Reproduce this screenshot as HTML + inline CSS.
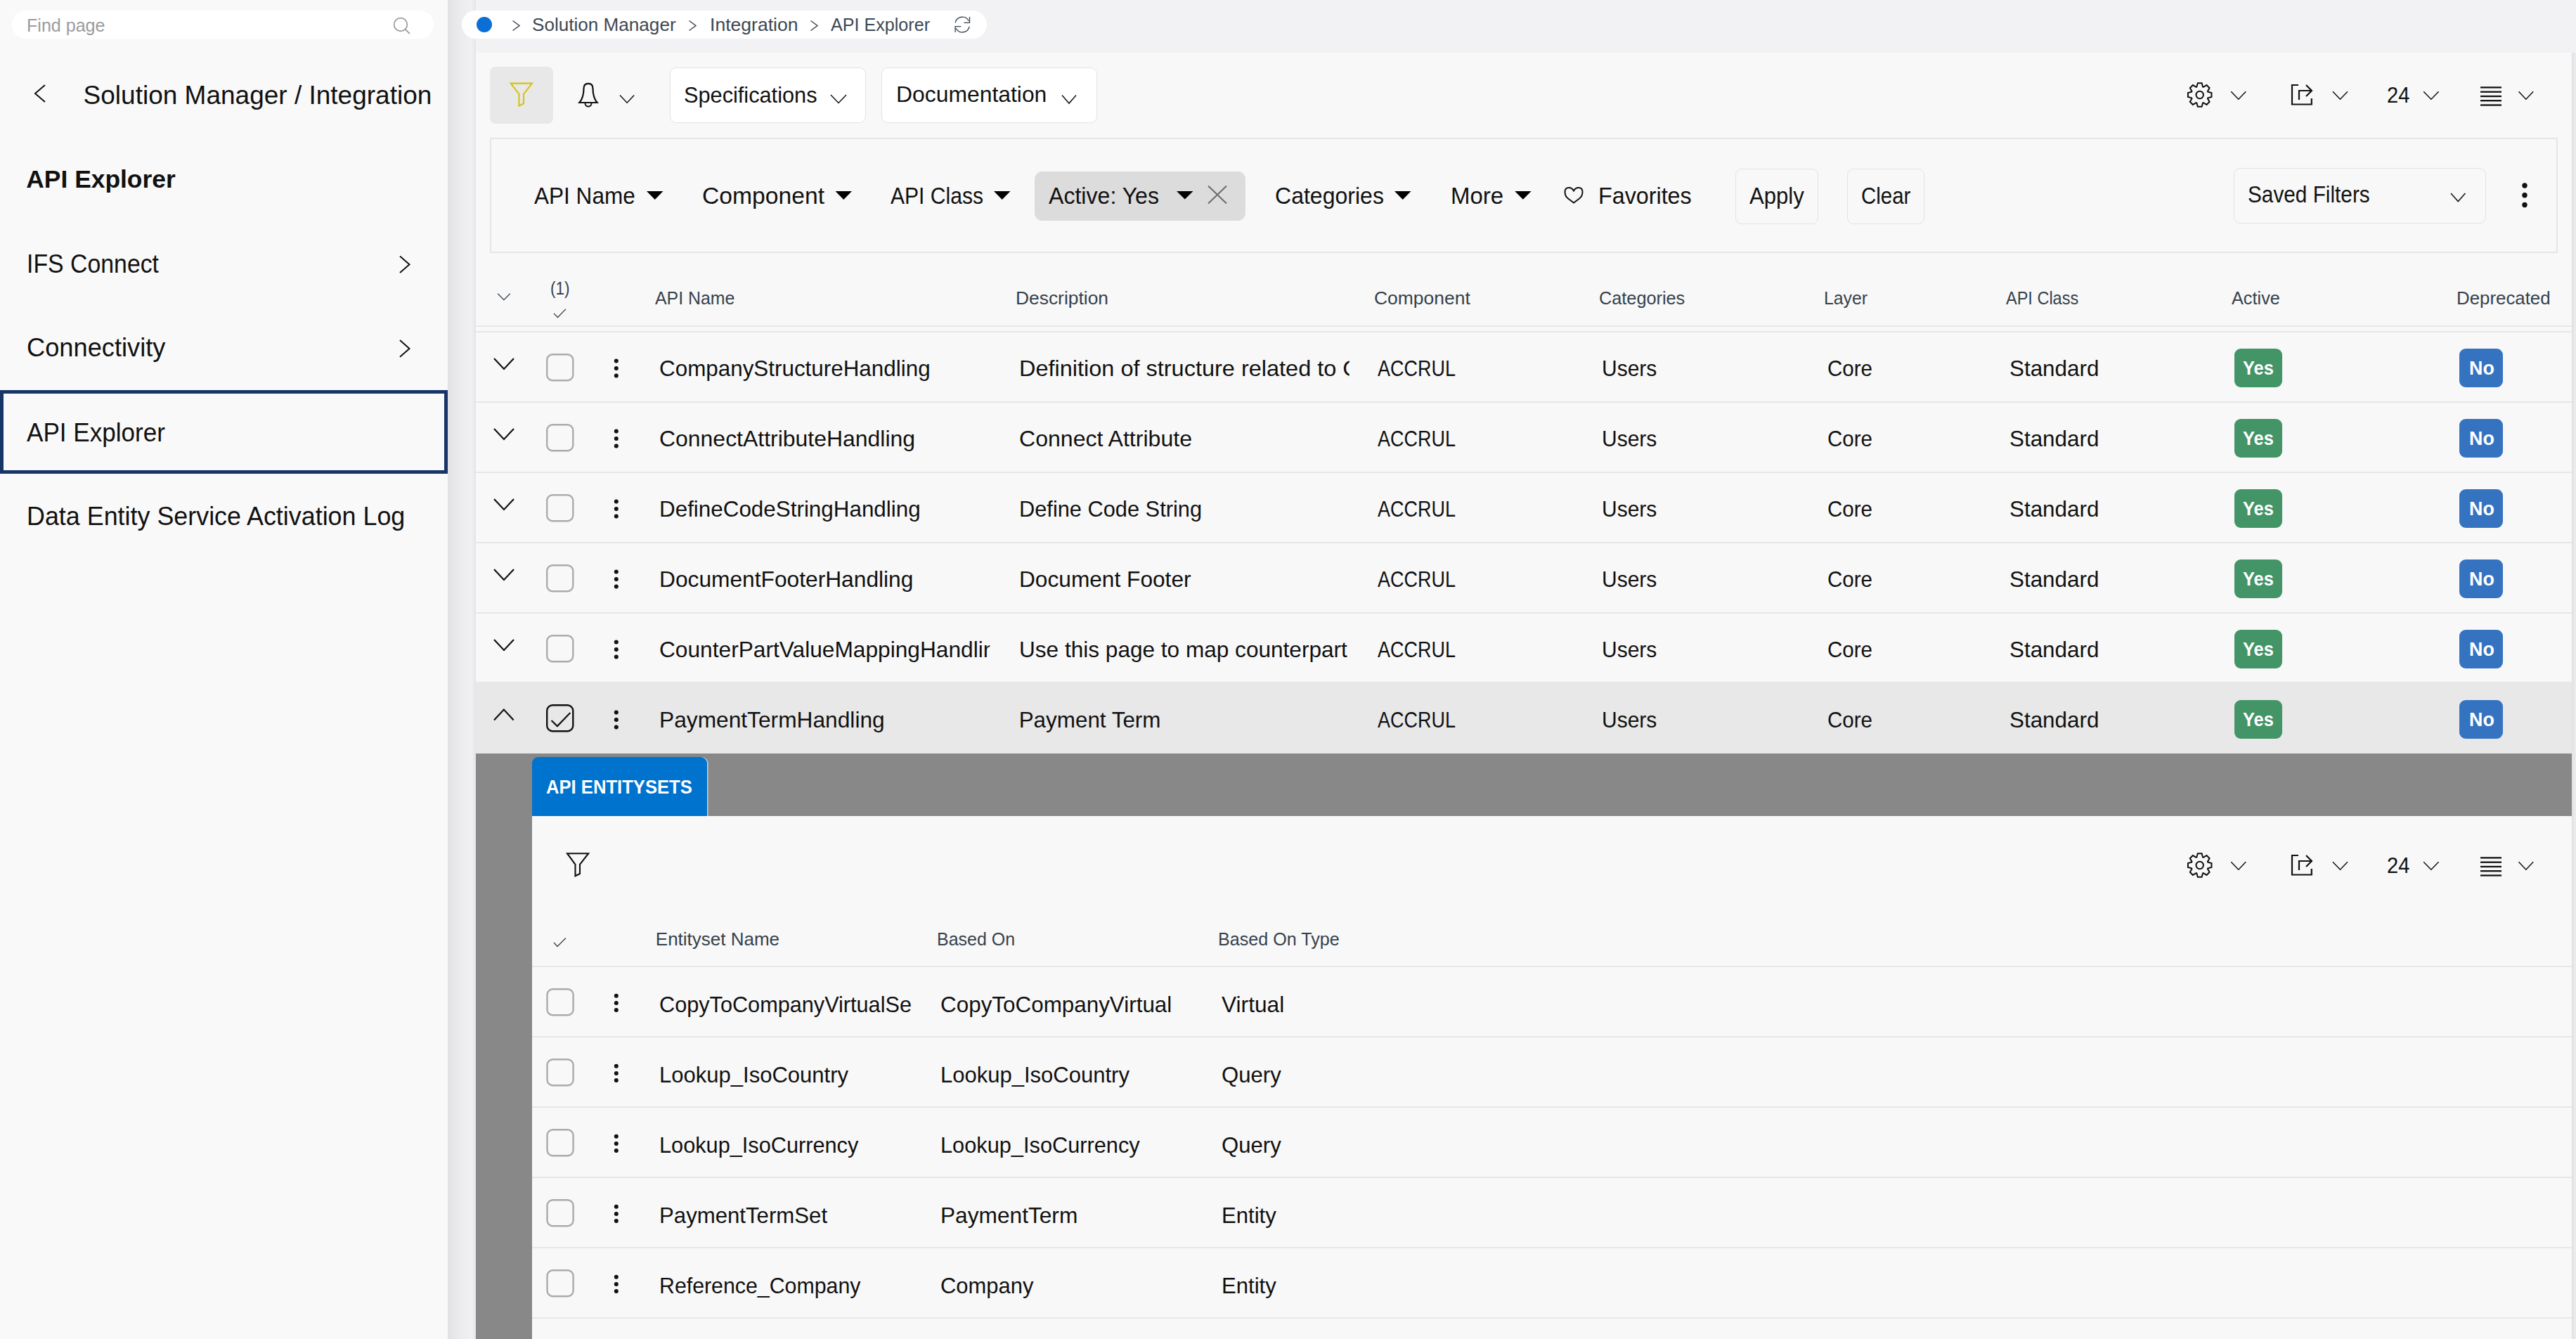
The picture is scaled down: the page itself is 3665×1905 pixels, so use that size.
<!DOCTYPE html>
<html><head><meta charset="utf-8"><style>
html,body{margin:0;padding:0;width:3665px;height:1905px;overflow:hidden;background:#f2f1f4}
body{position:relative;font-family:"Liberation Sans",sans-serif}
div{position:absolute}
.t{line-height:1;white-space:nowrap}
svg{position:absolute;left:0;top:0}
</style></head><body>

<div style="left:0px;top:0px;width:3665px;height:1905px;background:#f2f1f4"></div>
<div style="left:0px;top:0px;width:637px;height:1905px;background:#f9f9f9"></div>
<div style="left:637px;top:0px;width:40px;height:1905px;background:linear-gradient(90deg,#e2e0e4 0px,#e9e8ea 12px,#efeef1 28px,#f1f0f3 34px,#e4e3e6 40px)"></div>
<div style="left:17px;top:15px;width:600px;height:40px;background:#fff;border-radius:20px"></div>
<div style="left:0px;top:555px;width:637px;height:119px;box-sizing:border-box;border:5px solid #173569"></div>
<div style="left:657px;top:15px;width:747px;height:40px;background:#fff;border-radius:20px"></div>
<div style="left:678px;top:24px;width:22px;height:22px;background:#0b6fd6;border-radius:50%"></div>
<div style="left:677px;top:75px;width:2982px;height:1830px;background:#f8f8f8"></div>
<div style="left:3659px;top:75px;width:6px;height:1830px;background:linear-gradient(90deg,#e0dfe2,#eeedf0)"></div>
<div style="left:697px;top:95px;width:90px;height:81px;background:#e8e8e8;border-radius:8px"></div>
<div style="left:953px;top:95.5px;width:279px;height:79px;background:#fff;border:1.5px solid #e3e3e3;border-radius:9px;box-sizing:border-box"></div>
<div style="left:1253.5px;top:95.5px;width:307px;height:79px;background:#fff;border:1.5px solid #e3e3e3;border-radius:9px;box-sizing:border-box"></div>
<div style="left:697px;top:196px;width:2942px;height:164px;border:2px solid #e6e6e6;box-sizing:border-box"></div>
<div style="left:1472px;top:244px;width:300px;height:70px;background:#dcdcdc;border-radius:11px"></div>
<div style="left:2469px;top:239.5px;width:118px;height:79px;border:1.5px solid #e3e3e3;border-radius:9px;box-sizing:border-box"></div>
<div style="left:2628px;top:239.5px;width:110px;height:79px;border:1.5px solid #e3e3e3;border-radius:9px;box-sizing:border-box"></div>
<div style="left:3177.5px;top:238.5px;width:359px;height:79px;border:1.5px solid #e3e3e3;border-radius:9px;box-sizing:border-box"></div>
<div style="left:677px;top:463px;width:2982px;height:2px;background:#e7e7e7"></div>
<div style="left:677px;top:571px;width:2982px;height:2px;background:#e7e7e7"></div>
<div style="left:677px;top:671px;width:2982px;height:2px;background:#e7e7e7"></div>
<div style="left:677px;top:771px;width:2982px;height:2px;background:#e7e7e7"></div>
<div style="left:677px;top:871px;width:2982px;height:2px;background:#e7e7e7"></div>
<div style="left:677px;top:971px;width:2982px;height:2px;background:#e7e7e7"></div>
<div style="left:677px;top:1071px;width:2982px;height:2px;background:#e7e7e7"></div>
<div style="left:677px;top:471px;width:2982px;height:2px;background:#e7e7e7"></div>
<div style="left:677px;top:970px;width:2982px;height:102px;background:#e8e8e8"></div>
<div style="left:677px;top:1072px;width:2982px;height:833px;background:#888888"></div>
<div style="left:757px;top:1161px;width:2902px;height:744px;background:#f8f8f8"></div>
<div style="left:757px;top:1077px;width:249px;height:84px;background:#0073cf;border-radius:9px 9px 0 0;box-shadow:1.5px 0 0 #d0d0d0"></div>
<div style="left:677px;top:1374px;width:2982px;height:0px;"></div>
<div style="left:757px;top:1374px;width:2902px;height:2px;background:#e7e7e7"></div>
<div style="left:757px;top:1474px;width:2902px;height:2px;background:#e7e7e7"></div>
<div style="left:757px;top:1574px;width:2902px;height:2px;background:#e7e7e7"></div>
<div style="left:757px;top:1674px;width:2902px;height:2px;background:#e7e7e7"></div>
<div style="left:757px;top:1774px;width:2902px;height:2px;background:#e7e7e7"></div>
<div style="left:757px;top:1874px;width:2902px;height:2px;background:#e7e7e7"></div>
<div style="left:3179px;top:496px;width:68px;height:54.5px;background:#439467;border-radius:9px"></div>
<div style="left:3499px;top:496px;width:62px;height:54.5px;background:#3573c1;border-radius:9px"></div>
<div style="left:3179px;top:596px;width:68px;height:54.5px;background:#439467;border-radius:9px"></div>
<div style="left:3499px;top:596px;width:62px;height:54.5px;background:#3573c1;border-radius:9px"></div>
<div style="left:3179px;top:696px;width:68px;height:54.5px;background:#439467;border-radius:9px"></div>
<div style="left:3499px;top:696px;width:62px;height:54.5px;background:#3573c1;border-radius:9px"></div>
<div style="left:3179px;top:796px;width:68px;height:54.5px;background:#439467;border-radius:9px"></div>
<div style="left:3499px;top:796px;width:62px;height:54.5px;background:#3573c1;border-radius:9px"></div>
<div style="left:3179px;top:896px;width:68px;height:54.5px;background:#439467;border-radius:9px"></div>
<div style="left:3499px;top:896px;width:62px;height:54.5px;background:#3573c1;border-radius:9px"></div>
<div style="left:3179px;top:996px;width:68px;height:54.5px;background:#439467;border-radius:9px"></div>
<div style="left:3499px;top:996px;width:62px;height:54.5px;background:#3573c1;border-radius:9px"></div>
<svg width="3665" height="1905" viewBox="0 0 3665 1905"><circle cx="570" cy="35" r="9.3" fill="none" stroke="#9a9a9e" stroke-width="1.7"/>
<path d="M576.8 41.8 L582.8 47.8" fill="none" stroke="#9a9a9e" stroke-width="1.9" />
<path d="M64 121 L50 133 L64 145" fill="none" stroke="#111111" stroke-width="2" />
<path d="M569 364.5 L582.5 376.3 L569 388" fill="none" stroke="#111111" stroke-width="2" />
<path d="M569 484 L582.5 496 L569 507.8" fill="none" stroke="#111111" stroke-width="2" />
<path d="M729.5 29.5 L739.0 36.5 L729.5 43.5" fill="none" stroke="#3d4852" stroke-width="1.5" />
<path d="M980.5 29.5 L990.0 36.5 L980.5 43.5" fill="none" stroke="#3d4852" stroke-width="1.5" />
<path d="M1153.5 29.5 L1163.0 36.5 L1153.5 43.5" fill="none" stroke="#3d4852" stroke-width="1.5" />
<path d="M1359.2 32.3 A10.2 10.2 0 0 1 1378.3 29.8" fill="none" stroke="#37434d" stroke-width="1.3" />
<path d="M1379.5 24 L1379.5 32.3 L1371.4 32.3" fill="none" stroke="#37434d" stroke-width="1.3" />
<path d="M1379.2 37.7 A10.2 10.2 0 0 1 1360.1 40.2" fill="none" stroke="#37434d" stroke-width="1.3" />
<path d="M1359.1 46 L1359.1 37.7 L1367.2 37.7" fill="none" stroke="#37434d" stroke-width="1.3" />
<path d="M726.6 118.6 L757 118.6 L745 133.8 L745 147.3 L738.5 150.6 L738.5 133.8 Z" fill="none" stroke="#d6c411" stroke-width="2.1" stroke-linejoin="miter"/>
<path d="M824.3 146 C829.5 140 830.5 132 830.5 126 C830.5 121 833 118.8 837 118.8 C841 118.8 843.5 121 843.5 126 C843.5 132 844.5 140 849.7 146 Z" fill="none" stroke="#111111" stroke-width="2.2" />
<path d="M832.5 147 A4.5 4.5 0 0 0 841.5 147" fill="none" stroke="#111111" stroke-width="2" />
<path d="M882 135.5 L892.1 146.2 L902.2 135.5" fill="none" stroke="#111111" stroke-width="1.5" />
<path d="M1182 135 L1193.0 146.5 L1204 135" fill="none" stroke="#111111" stroke-width="1.5" />
<path d="M1511 135.5 L1521.0 147 L1531 135.5" fill="none" stroke="#111111" stroke-width="1.5" />
<path d="M3125.37 123.49 L3126.82 118.25 L3132.58 118.25 L3134.03 123.49 L3134.78 123.80 L3139.51 121.12 L3143.58 125.19 L3140.90 129.92 L3141.21 130.67 L3146.45 132.12 L3146.45 137.88 L3141.21 139.33 L3140.90 140.08 L3143.58 144.81 L3139.51 148.88 L3134.78 146.20 L3134.03 146.51 L3132.58 151.75 L3126.82 151.75 L3125.37 146.51 L3124.62 146.20 L3119.89 148.88 L3115.82 144.81 L3118.50 140.08 L3118.19 139.33 L3112.95 137.88 L3112.95 132.12 L3118.19 130.67 L3118.50 129.92 L3115.82 125.19 L3119.89 121.12 L3124.62 123.80 Z" fill="none" stroke="#111111" stroke-width="2" />
<circle cx="3129.7" cy="135" r="5.2" fill="none" stroke="#111111" stroke-width="2"/>
<path d="M3174.3 130.2 L3184.8 141.2 L3195.3 130.2" fill="none" stroke="#111111" stroke-width="1.5" />
<path d="M3270 121 L3261 121 L3261 148.5 L3288.8 148.5 L3288.8 140" fill="none" stroke="#111111" stroke-width="2.2" />
<path d="M3271 142 L3271 129 L3288 129" fill="none" stroke="#111111" stroke-width="2.2" />
<path d="M3281 121 L3289 129 L3281 137" fill="none" stroke="#111111" stroke-width="2.2" />
<path d="M3319 130.2 L3329.5 141.2 L3340 130.2" fill="none" stroke="#111111" stroke-width="1.5" />
<path d="M3448.2 130.2 L3458.8999999999996 141.2 L3469.6 130.2" fill="none" stroke="#111111" stroke-width="1.5" />
<path d="M3529 124.4 L3559 124.4" fill="none" stroke="#111111" stroke-width="2.3" />
<path d="M3529 130.7 L3559 130.7" fill="none" stroke="#111111" stroke-width="2.3" />
<path d="M3529 137 L3559 137" fill="none" stroke="#111111" stroke-width="2.3" />
<path d="M3529 143.2 L3559 143.2" fill="none" stroke="#111111" stroke-width="2.3" />
<path d="M3529 149.5 L3559 149.5" fill="none" stroke="#111111" stroke-width="2.3" />
<path d="M3583.5 130.2 L3593.85 141.2 L3604.2 130.2" fill="none" stroke="#111111" stroke-width="1.5" />
<path d="M3125.37 1219.49 L3126.82 1214.25 L3132.58 1214.25 L3134.03 1219.49 L3134.78 1219.80 L3139.51 1217.12 L3143.58 1221.19 L3140.90 1225.92 L3141.21 1226.67 L3146.45 1228.12 L3146.45 1233.88 L3141.21 1235.33 L3140.90 1236.08 L3143.58 1240.81 L3139.51 1244.88 L3134.78 1242.20 L3134.03 1242.51 L3132.58 1247.75 L3126.82 1247.75 L3125.37 1242.51 L3124.62 1242.20 L3119.89 1244.88 L3115.82 1240.81 L3118.50 1236.08 L3118.19 1235.33 L3112.95 1233.88 L3112.95 1228.12 L3118.19 1226.67 L3118.50 1225.92 L3115.82 1221.19 L3119.89 1217.12 L3124.62 1219.80 Z" fill="none" stroke="#111111" stroke-width="2" />
<circle cx="3129.7" cy="1231" r="5.2" fill="none" stroke="#111111" stroke-width="2"/>
<path d="M3174.3 1226.2 L3184.8 1237.2 L3195.3 1226.2" fill="none" stroke="#111111" stroke-width="1.5" />
<path d="M3270 1217 L3261 1217 L3261 1244.5 L3288.8 1244.5 L3288.8 1236" fill="none" stroke="#111111" stroke-width="2.2" />
<path d="M3271 1238 L3271 1225 L3288 1225" fill="none" stroke="#111111" stroke-width="2.2" />
<path d="M3281 1217 L3289 1225 L3281 1233" fill="none" stroke="#111111" stroke-width="2.2" />
<path d="M3319 1226.2 L3329.5 1237.2 L3340 1226.2" fill="none" stroke="#111111" stroke-width="1.5" />
<path d="M3448.2 1226.2 L3458.8999999999996 1237.2 L3469.6 1226.2" fill="none" stroke="#111111" stroke-width="1.5" />
<path d="M3529 1220.4 L3559 1220.4" fill="none" stroke="#111111" stroke-width="2.3" />
<path d="M3529 1226.7 L3559 1226.7" fill="none" stroke="#111111" stroke-width="2.3" />
<path d="M3529 1233 L3559 1233" fill="none" stroke="#111111" stroke-width="2.3" />
<path d="M3529 1239.2 L3559 1239.2" fill="none" stroke="#111111" stroke-width="2.3" />
<path d="M3529 1245.5 L3559 1245.5" fill="none" stroke="#111111" stroke-width="2.3" />
<path d="M3583.5 1226.2 L3593.85 1237.2 L3604.2 1226.2" fill="none" stroke="#111111" stroke-width="1.5" />
<path d="M920 272 L943.5 272 L931.75 284 Z" fill="#000"/>
<path d="M1188.5 272 L1212 272 L1200.25 284 Z" fill="#000"/>
<path d="M1414 272 L1437.5 272 L1425.75 284 Z" fill="#000"/>
<path d="M1674 272 L1697.5 272 L1685.75 283.5 Z" fill="#000"/>
<path d="M1984 272 L2007.5 272 L1995.75 284 Z" fill="#000"/>
<path d="M2155.2 272 L2178.6 272 L2166.8999999999996 283.8 Z" fill="#000"/>
<path d="M1719 264.5 L1745 289.5 M1745 264.5 L1719 289.5" fill="none" stroke="#6b6b6b" stroke-width="2" />
<path d="M2239 288.5 L2231 282.5 C2227 279.5 2226.5 276.5 2226.5 273 C2226.5 268.8 2229 267 2232.2 267 C2235.2 267 2237.5 268.8 2239 271.5 C2240.5 268.8 2242.8 267 2245.8 267 C2249 267 2251.5 268.8 2251.5 273 C2251.5 276.5 2251 279.5 2247 282.5 Z" fill="none" stroke="#111111" stroke-width="2" />
<path d="M3487 275 L3497.25 286.5 L3507.5 275" fill="none" stroke="#111111" stroke-width="1.5" />
<circle cx="3592" cy="264" r="3.7" fill="#111111"/>
<circle cx="3592" cy="277.8" r="3.7" fill="#111111"/>
<circle cx="3592" cy="291.5" r="3.7" fill="#111111"/>
<path d="M708.2 417.8 L716.95 426.6 L725.7 417.8" fill="none" stroke="#35414c" stroke-width="1.3" />
<path d="M788 446 L793.5 451.5 L805 439.6" fill="none" stroke="#35414c" stroke-width="1.3" />
<path d="M703 510 L717.0 525 L731 510" fill="none" stroke="#111111" stroke-width="2.2" />
<rect x="778.2" y="504.2" width="37.1" height="37.1" rx="8" fill="none" stroke="#ababab" stroke-width="2.4"/>
<circle cx="876.8" cy="513.5" r="3.0" fill="#111111"/>
<circle cx="876.8" cy="524" r="3.0" fill="#111111"/>
<circle cx="876.8" cy="534.4" r="3.0" fill="#111111"/>
<path d="M703 610 L717.0 625 L731 610" fill="none" stroke="#111111" stroke-width="2.2" />
<rect x="778.2" y="604.2" width="37.1" height="37.1" rx="8" fill="none" stroke="#ababab" stroke-width="2.4"/>
<circle cx="876.8" cy="613.5" r="3.0" fill="#111111"/>
<circle cx="876.8" cy="624" r="3.0" fill="#111111"/>
<circle cx="876.8" cy="634.4" r="3.0" fill="#111111"/>
<path d="M703 710 L717.0 725 L731 710" fill="none" stroke="#111111" stroke-width="2.2" />
<rect x="778.2" y="704.2" width="37.1" height="37.1" rx="8" fill="none" stroke="#ababab" stroke-width="2.4"/>
<circle cx="876.8" cy="713.5" r="3.0" fill="#111111"/>
<circle cx="876.8" cy="724" r="3.0" fill="#111111"/>
<circle cx="876.8" cy="734.4" r="3.0" fill="#111111"/>
<path d="M703 810 L717.0 825 L731 810" fill="none" stroke="#111111" stroke-width="2.2" />
<rect x="778.2" y="804.2" width="37.1" height="37.1" rx="8" fill="none" stroke="#ababab" stroke-width="2.4"/>
<circle cx="876.8" cy="813.5" r="3.0" fill="#111111"/>
<circle cx="876.8" cy="824" r="3.0" fill="#111111"/>
<circle cx="876.8" cy="834.4" r="3.0" fill="#111111"/>
<path d="M703 910 L717.0 925 L731 910" fill="none" stroke="#111111" stroke-width="2.2" />
<rect x="778.2" y="904.2" width="37.1" height="37.1" rx="8" fill="none" stroke="#ababab" stroke-width="2.4"/>
<circle cx="876.8" cy="913.5" r="3.0" fill="#111111"/>
<circle cx="876.8" cy="924" r="3.0" fill="#111111"/>
<circle cx="876.8" cy="934.4" r="3.0" fill="#111111"/>
<path d="M703 1024.5 L716.85 1009.5 L730.7 1024.5" fill="none" stroke="#111111" stroke-width="2.2" />
<rect x="778.2" y="1003.2" width="37.1" height="37.1" rx="8" fill="none" stroke="#111" stroke-width="2.4"/>
<path d="M784.5 1025 L792.9 1033.1 L811.4 1013.9" fill="none" stroke="#111111" stroke-width="2.2" />
<circle cx="876.8" cy="1013.5" r="3.0" fill="#111111"/>
<circle cx="876.8" cy="1024" r="3.0" fill="#111111"/>
<circle cx="876.8" cy="1034.4" r="3.0" fill="#111111"/>
<path d="M807 1214.2 L837.2 1214.2 L825 1229.8 L825 1243 L818.5 1246.3 L818.5 1229.8 Z" fill="none" stroke="#111111" stroke-width="2.1" />
<path d="M788 1341 L793 1346.5 L805 1334.5" fill="none" stroke="#35414c" stroke-width="1.3" />
<rect x="778.5" y="1407.2" width="37.1" height="37.1" rx="8" fill="none" stroke="#ababab" stroke-width="2.4"/>
<circle cx="876.8" cy="1416.8" r="3.0" fill="#111111"/>
<circle cx="876.8" cy="1426.9" r="3.0" fill="#111111"/>
<circle cx="876.8" cy="1437.1" r="3.0" fill="#111111"/>
<rect x="778.5" y="1507.2" width="37.1" height="37.1" rx="8" fill="none" stroke="#ababab" stroke-width="2.4"/>
<circle cx="876.8" cy="1516.8" r="3.0" fill="#111111"/>
<circle cx="876.8" cy="1526.9" r="3.0" fill="#111111"/>
<circle cx="876.8" cy="1537.1" r="3.0" fill="#111111"/>
<rect x="778.5" y="1607.2" width="37.1" height="37.1" rx="8" fill="none" stroke="#ababab" stroke-width="2.4"/>
<circle cx="876.8" cy="1616.8" r="3.0" fill="#111111"/>
<circle cx="876.8" cy="1626.9" r="3.0" fill="#111111"/>
<circle cx="876.8" cy="1637.1" r="3.0" fill="#111111"/>
<rect x="778.5" y="1707.2" width="37.1" height="37.1" rx="8" fill="none" stroke="#ababab" stroke-width="2.4"/>
<circle cx="876.8" cy="1716.8" r="3.0" fill="#111111"/>
<circle cx="876.8" cy="1726.9" r="3.0" fill="#111111"/>
<circle cx="876.8" cy="1737.1" r="3.0" fill="#111111"/>
<rect x="778.5" y="1807.2" width="37.1" height="37.1" rx="8" fill="none" stroke="#ababab" stroke-width="2.4"/>
<circle cx="876.8" cy="1816.8" r="3.0" fill="#111111"/>
<circle cx="876.8" cy="1826.9" r="3.0" fill="#111111"/>
<circle cx="876.8" cy="1837.1" r="3.0" fill="#111111"/></svg>
<div class="t" style="left:38.00px;top:22.86px;font-size:26.50px;color:#9b9ba0;transform:scaleX(0.9460);transform-origin:0.00px 0;">Find page</div>
<div class="t" style="left:118.60px;top:116.67px;font-size:37.00px;color:#111111;">Solution Manager / Integration</div>
<div class="t" style="left:37.30px;top:238.03px;font-size:35.40px;color:#111111;font-weight:700;">API Explorer</div>
<div class="t" style="left:38.40px;top:357.60px;font-size:36.50px;color:#111111;transform:scaleX(0.9268);transform-origin:0.00px 0;">IFS Connect</div>
<div class="t" style="left:38.40px;top:477.00px;font-size:36.50px;color:#111111;transform:scaleX(0.9933);transform-origin:0.00px 0;">Connectivity</div>
<div class="t" style="left:38.40px;top:597.60px;font-size:36.50px;color:#111111;transform:scaleX(0.9607);transform-origin:0.00px 0;">API Explorer</div>
<div class="t" style="left:38.40px;top:717.00px;font-size:36.50px;color:#111111;transform:scaleX(0.9827);transform-origin:0.00px 0;">Data Entity Service Activation Log</div>
<div class="t" style="left:757.00px;top:21.73px;font-size:26.30px;color:#3d4852;transform:scaleX(0.9926);transform-origin:0.00px 0;">Solution Manager</div>
<div class="t" style="left:1010.00px;top:21.73px;font-size:26.30px;color:#3d4852;transform:scaleX(1.0099);transform-origin:0.00px 0;">Integration</div>
<div class="t" style="left:1182.00px;top:21.73px;font-size:26.30px;color:#3d4852;transform:scaleX(0.9552);transform-origin:0.00px 0;">API Explorer</div>
<div class="t" style="left:972.50px;top:119.50px;font-size:31.30px;color:#111111;transform:scaleX(0.9813);transform-origin:0.00px 0;">Specifications</div>
<div class="t" style="left:1275.00px;top:119.40px;font-size:31.30px;color:#111111;transform:scaleX(1.0182);transform-origin:0.00px 0;">Documentation</div>
<div class="t" style="left:3396.00px;top:119.50px;font-size:31.30px;color:#111111;transform:scaleX(0.9276);transform-origin:0.00px 0;">24</div>
<div class="t" style="left:3396.00px;top:1215.50px;font-size:31.30px;color:#111111;transform:scaleX(0.9276);transform-origin:0.00px 0;">24</div>
<div class="t" style="left:759.80px;top:263.48px;font-size:32.50px;color:#111111;transform:scaleX(0.9708);transform-origin:0.00px 0;">API Name</div>
<div class="t" style="left:999.00px;top:263.48px;font-size:32.50px;color:#111111;transform:scaleX(1.0356);transform-origin:0.00px 0;">Component</div>
<div class="t" style="left:1267.00px;top:263.48px;font-size:32.50px;color:#111111;transform:scaleX(0.9252);transform-origin:0.00px 0;">API Class</div>
<div class="t" style="left:1492.00px;top:263.08px;font-size:32.50px;color:#111111;transform:scaleX(0.9874);transform-origin:0.00px 0;">Active: Yes</div>
<div class="t" style="left:1813.60px;top:263.48px;font-size:32.50px;color:#111111;transform:scaleX(0.9858);transform-origin:0.00px 0;">Categories</div>
<div class="t" style="left:2063.80px;top:263.48px;font-size:32.50px;color:#111111;transform:scaleX(1.0160);transform-origin:0.00px 0;">More</div>
<div class="t" style="left:2274.00px;top:263.48px;font-size:32.50px;color:#111111;transform:scaleX(0.9928);transform-origin:0.00px 0;">Favorites</div>
<div class="t" style="left:2489.00px;top:263.48px;font-size:32.50px;color:#111111;transform:scaleX(0.9566);transform-origin:0.00px 0;">Apply</div>
<div class="t" style="left:2647.90px;top:263.48px;font-size:32.50px;color:#111111;transform:scaleX(0.9063);transform-origin:0.00px 0;">Clear</div>
<div class="t" style="left:3198.00px;top:261.48px;font-size:32.50px;color:#111111;transform:scaleX(0.9160);transform-origin:0.00px 0;">Saved Filters</div>
<div class="t" style="left:783.20px;top:397.19px;font-size:26.00px;color:#35414c;transform:scaleX(0.8652);transform-origin:0.00px 0;">(1)</div>
<div class="t" style="left:932.40px;top:410.99px;font-size:26.00px;color:#35414c;transform:scaleX(0.9570);transform-origin:0.00px 0;">API Name</div>
<div class="t" style="left:1444.60px;top:410.99px;font-size:26.00px;color:#35414c;transform:scaleX(1.0149);transform-origin:0.00px 0;">Description</div>
<div class="t" style="left:1955.00px;top:410.99px;font-size:26.00px;color:#35414c;transform:scaleX(1.0177);transform-origin:0.00px 0;">Component</div>
<div class="t" style="left:2275.10px;top:410.99px;font-size:26.00px;color:#35414c;transform:scaleX(0.9721);transform-origin:0.00px 0;">Categories</div>
<div class="t" style="left:2595.00px;top:410.99px;font-size:26.00px;color:#35414c;transform:scaleX(0.9514);transform-origin:0.00px 0;">Layer</div>
<div class="t" style="left:2854.30px;top:410.99px;font-size:26.00px;color:#35414c;transform:scaleX(0.9042);transform-origin:0.00px 0;">API Class</div>
<div class="t" style="left:3174.50px;top:410.99px;font-size:26.00px;color:#35414c;transform:scaleX(0.9720);transform-origin:0.00px 0;">Active</div>
<div class="t" style="left:3495.30px;top:410.99px;font-size:26.00px;color:#35414c;transform:scaleX(0.9939);transform-origin:0.00px 0;">Deprecated</div>
<div class="t" style="left:938.00px;top:509.21px;font-size:31.40px;color:#111111;width:468.62px;height:44.0px;overflow:hidden;">CompanyStructureHandling</div>
<div class="t" style="left:1449.70px;top:509.21px;font-size:31.40px;color:#111111;transform:scaleX(1.0347);transform-origin:0.00px 0;width:453.57px;height:44.0px;overflow:hidden;">Definition of structure related to C</div>
<div class="t" style="left:1959.80px;top:509.21px;font-size:31.40px;color:#111111;transform:scaleX(0.8596);transform-origin:0.00px 0;">ACCRUL</div>
<div class="t" style="left:2279.30px;top:509.21px;font-size:31.40px;color:#111111;transform:scaleX(0.9557);transform-origin:0.00px 0;">Users</div>
<div class="t" style="left:2600.00px;top:509.21px;font-size:31.40px;color:#111111;transform:scaleX(0.9404);transform-origin:0.00px 0;">Core</div>
<div class="t" style="left:2859.00px;top:509.21px;font-size:31.40px;color:#111111;">Standard</div>
<div class="t" style="left:3191.00px;top:509.72px;font-size:27.50px;color:#fff;font-weight:700;transform:scaleX(0.9254);transform-origin:0.00px 0;">Yes</div>
<div class="t" style="left:3512.90px;top:509.72px;font-size:27.50px;color:#fff;font-weight:700;transform:scaleX(0.9770);transform-origin:0.00px 0;">No</div>
<div class="t" style="left:938.00px;top:609.21px;font-size:31.40px;color:#111111;transform:scaleX(1.0177);transform-origin:0.00px 0;width:462.34px;height:44.0px;overflow:hidden;">ConnectAttributeHandling</div>
<div class="t" style="left:1449.70px;top:609.21px;font-size:31.40px;color:#111111;transform:scaleX(1.0215);transform-origin:0.00px 0;width:459.42px;height:44.0px;overflow:hidden;">Connect Attribute</div>
<div class="t" style="left:1959.80px;top:609.21px;font-size:31.40px;color:#111111;transform:scaleX(0.8596);transform-origin:0.00px 0;">ACCRUL</div>
<div class="t" style="left:2279.30px;top:609.21px;font-size:31.40px;color:#111111;transform:scaleX(0.9557);transform-origin:0.00px 0;">Users</div>
<div class="t" style="left:2600.00px;top:609.21px;font-size:31.40px;color:#111111;transform:scaleX(0.9404);transform-origin:0.00px 0;">Core</div>
<div class="t" style="left:2859.00px;top:609.21px;font-size:31.40px;color:#111111;">Standard</div>
<div class="t" style="left:3191.00px;top:609.72px;font-size:27.50px;color:#fff;font-weight:700;transform:scaleX(0.9254);transform-origin:0.00px 0;">Yes</div>
<div class="t" style="left:3512.90px;top:609.72px;font-size:27.50px;color:#fff;font-weight:700;transform:scaleX(0.9770);transform-origin:0.00px 0;">No</div>
<div class="t" style="left:938.00px;top:709.21px;font-size:31.40px;color:#111111;width:472.86px;height:44.0px;overflow:hidden;">DefineCodeStringHandling</div>
<div class="t" style="left:1449.70px;top:709.21px;font-size:31.40px;color:#111111;transform:scaleX(0.9803);transform-origin:0.00px 0;width:478.74px;height:44.0px;overflow:hidden;">Define Code String</div>
<div class="t" style="left:1959.80px;top:709.21px;font-size:31.40px;color:#111111;transform:scaleX(0.8596);transform-origin:0.00px 0;">ACCRUL</div>
<div class="t" style="left:2279.30px;top:709.21px;font-size:31.40px;color:#111111;transform:scaleX(0.9557);transform-origin:0.00px 0;">Users</div>
<div class="t" style="left:2600.00px;top:709.21px;font-size:31.40px;color:#111111;transform:scaleX(0.9404);transform-origin:0.00px 0;">Core</div>
<div class="t" style="left:2859.00px;top:709.21px;font-size:31.40px;color:#111111;">Standard</div>
<div class="t" style="left:3191.00px;top:709.72px;font-size:27.50px;color:#fff;font-weight:700;transform:scaleX(0.9254);transform-origin:0.00px 0;">Yes</div>
<div class="t" style="left:3512.90px;top:709.72px;font-size:27.50px;color:#fff;font-weight:700;transform:scaleX(0.9770);transform-origin:0.00px 0;">No</div>
<div class="t" style="left:938.00px;top:809.21px;font-size:31.40px;color:#111111;transform:scaleX(1.0103);transform-origin:0.00px 0;width:465.69px;height:44.0px;overflow:hidden;">DocumentFooterHandling</div>
<div class="t" style="left:1449.70px;top:809.21px;font-size:31.40px;color:#111111;transform:scaleX(1.0084);transform-origin:0.00px 0;width:465.40px;height:44.0px;overflow:hidden;">Document Footer</div>
<div class="t" style="left:1959.80px;top:809.21px;font-size:31.40px;color:#111111;transform:scaleX(0.8596);transform-origin:0.00px 0;">ACCRUL</div>
<div class="t" style="left:2279.30px;top:809.21px;font-size:31.40px;color:#111111;transform:scaleX(0.9557);transform-origin:0.00px 0;">Users</div>
<div class="t" style="left:2600.00px;top:809.21px;font-size:31.40px;color:#111111;transform:scaleX(0.9404);transform-origin:0.00px 0;">Core</div>
<div class="t" style="left:2859.00px;top:809.21px;font-size:31.40px;color:#111111;">Standard</div>
<div class="t" style="left:3191.00px;top:809.72px;font-size:27.50px;color:#fff;font-weight:700;transform:scaleX(0.9254);transform-origin:0.00px 0;">Yes</div>
<div class="t" style="left:3512.90px;top:809.72px;font-size:27.50px;color:#fff;font-weight:700;transform:scaleX(0.9770);transform-origin:0.00px 0;">No</div>
<div class="t" style="left:938.00px;top:909.21px;font-size:31.40px;color:#111111;transform:scaleX(1.0090);transform-origin:0.00px 0;width:466.29px;height:44.0px;overflow:hidden;">CounterPartValueMappingHandlin</div>
<div class="t" style="left:1449.70px;top:909.21px;font-size:31.40px;color:#111111;transform:scaleX(1.0058);transform-origin:0.00px 0;width:466.61px;height:44.0px;overflow:hidden;">Use this page to map counterpart</div>
<div class="t" style="left:1959.80px;top:909.21px;font-size:31.40px;color:#111111;transform:scaleX(0.8596);transform-origin:0.00px 0;">ACCRUL</div>
<div class="t" style="left:2279.30px;top:909.21px;font-size:31.40px;color:#111111;transform:scaleX(0.9557);transform-origin:0.00px 0;">Users</div>
<div class="t" style="left:2600.00px;top:909.21px;font-size:31.40px;color:#111111;transform:scaleX(0.9404);transform-origin:0.00px 0;">Core</div>
<div class="t" style="left:2859.00px;top:909.21px;font-size:31.40px;color:#111111;">Standard</div>
<div class="t" style="left:3191.00px;top:909.72px;font-size:27.50px;color:#fff;font-weight:700;transform:scaleX(0.9254);transform-origin:0.00px 0;">Yes</div>
<div class="t" style="left:3512.90px;top:909.72px;font-size:27.50px;color:#fff;font-weight:700;transform:scaleX(0.9770);transform-origin:0.00px 0;">No</div>
<div class="t" style="left:938.00px;top:1009.21px;font-size:31.40px;color:#111111;transform:scaleX(1.0100);transform-origin:0.00px 0;width:465.82px;height:44.0px;overflow:hidden;">PaymentTermHandling</div>
<div class="t" style="left:1449.70px;top:1009.21px;font-size:31.40px;color:#111111;width:468.89px;height:44.0px;overflow:hidden;">Payment Term</div>
<div class="t" style="left:1959.80px;top:1009.21px;font-size:31.40px;color:#111111;transform:scaleX(0.8596);transform-origin:0.00px 0;">ACCRUL</div>
<div class="t" style="left:2279.30px;top:1009.21px;font-size:31.40px;color:#111111;transform:scaleX(0.9557);transform-origin:0.00px 0;">Users</div>
<div class="t" style="left:2600.00px;top:1009.21px;font-size:31.40px;color:#111111;transform:scaleX(0.9404);transform-origin:0.00px 0;">Core</div>
<div class="t" style="left:2859.00px;top:1009.21px;font-size:31.40px;color:#111111;">Standard</div>
<div class="t" style="left:3191.00px;top:1009.72px;font-size:27.50px;color:#fff;font-weight:700;transform:scaleX(0.9254);transform-origin:0.00px 0;">Yes</div>
<div class="t" style="left:3512.90px;top:1009.72px;font-size:27.50px;color:#fff;font-weight:700;transform:scaleX(0.9770);transform-origin:0.00px 0;">No</div>
<div class="t" style="left:777.00px;top:1106.02px;font-size:27.50px;color:#fff;font-weight:700;transform:scaleX(0.9314);transform-origin:0.00px 0;">API ENTITYSETS</div>
<div class="t" style="left:932.80px;top:1323.29px;font-size:26.00px;color:#35414c;">Entityset Name</div>
<div class="t" style="left:1332.80px;top:1323.29px;font-size:26.00px;color:#35414c;transform:scaleX(0.9608);transform-origin:0.00px 0;">Based On</div>
<div class="t" style="left:1732.80px;top:1323.29px;font-size:26.00px;color:#35414c;transform:scaleX(0.9662);transform-origin:0.00px 0;">Based On Type</div>
<div class="t" style="left:938.20px;top:1413.61px;font-size:31.40px;color:#111111;transform:scaleX(0.9766);transform-origin:0.00px 0;width:368.41px;height:44.0px;overflow:hidden;">CopyToCompanyVirtualSe</div>
<div class="t" style="left:1338.10px;top:1413.61px;font-size:31.40px;color:#111111;">CopyToCompanyVirtual</div>
<div class="t" style="left:1737.90px;top:1413.61px;font-size:31.40px;color:#111111;transform:scaleX(1.0094);transform-origin:0.00px 0;">Virtual</div>
<div class="t" style="left:938.20px;top:1513.61px;font-size:31.40px;color:#111111;transform:scaleX(0.9882);transform-origin:0.00px 0;width:364.10px;height:44.0px;overflow:hidden;">Lookup_IsoCountry</div>
<div class="t" style="left:1338.10px;top:1513.61px;font-size:31.40px;color:#111111;transform:scaleX(0.9878);transform-origin:0.00px 0;">Lookup_IsoCountry</div>
<div class="t" style="left:1737.90px;top:1513.61px;font-size:31.40px;color:#111111;transform:scaleX(0.9908);transform-origin:0.00px 0;">Query</div>
<div class="t" style="left:938.20px;top:1613.61px;font-size:31.40px;color:#111111;transform:scaleX(0.9781);transform-origin:0.00px 0;width:367.85px;height:44.0px;overflow:hidden;">Lookup_IsoCurrency</div>
<div class="t" style="left:1338.10px;top:1613.61px;font-size:31.40px;color:#111111;transform:scaleX(0.9795);transform-origin:0.00px 0;">Lookup_IsoCurrency</div>
<div class="t" style="left:1737.90px;top:1613.61px;font-size:31.40px;color:#111111;transform:scaleX(0.9908);transform-origin:0.00px 0;">Query</div>
<div class="t" style="left:938.20px;top:1713.61px;font-size:31.40px;color:#111111;transform:scaleX(0.9932);transform-origin:0.00px 0;width:362.26px;height:44.0px;overflow:hidden;">PaymentTermSet</div>
<div class="t" style="left:1338.10px;top:1713.61px;font-size:31.40px;color:#111111;transform:scaleX(1.0085);transform-origin:0.00px 0;">PaymentTerm</div>
<div class="t" style="left:1737.90px;top:1713.61px;font-size:31.40px;color:#111111;transform:scaleX(0.9898);transform-origin:0.00px 0;">Entity</div>
<div class="t" style="left:938.20px;top:1813.61px;font-size:31.40px;color:#111111;transform:scaleX(0.9655);transform-origin:0.00px 0;width:372.65px;height:44.0px;overflow:hidden;">Reference_Company</div>
<div class="t" style="left:1338.10px;top:1813.61px;font-size:31.40px;color:#111111;transform:scaleX(0.9852);transform-origin:0.00px 0;">Company</div>
<div class="t" style="left:1737.90px;top:1813.61px;font-size:31.40px;color:#111111;transform:scaleX(0.9898);transform-origin:0.00px 0;">Entity</div>
</body></html>
